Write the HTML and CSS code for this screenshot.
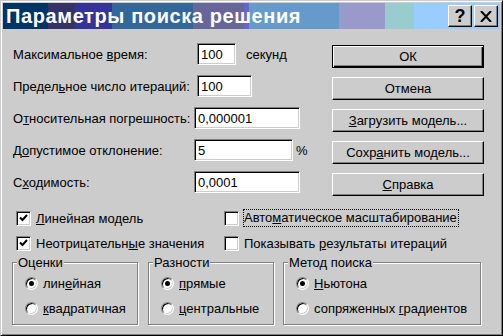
FILE: index.html
```html
<!DOCTYPE html>
<html lang="ru">

<head>
    <meta charset="UTF-8">
    <title>Параметры поиска решения</title>
    <link rel="stylesheet" href="styles.css">
</head>

<body>
    <div class="window">
        <!-- Title bar -->
        <div class="titlebar">
            <span class="title">Параметры поиска решения</span>
            <div class="caption-buttons">
                <button class="caption-btn help">?</button>
                <button class="caption-btn close">
                    <svg width="12" height="11" viewBox="0 0 12 11">
                        <path d="M1 0 L11 11 M11 0 L1 11" stroke="#000" stroke-width="2" />
                    </svg>
                </button>
            </div>
        </div>

        <div class="content">
            <div class="top">
                <div class="fields">
                    <div class="label">Максимальное <u>в</u>ремя:</div>
                    <div class="field shift">
                        <div class="input w39">100</div>
                        <span class="unit">секунд</span>
                    </div>

                    <div class="label">Предел<u>ь</u>ное число итераций:</div>
                    <div class="field shift">
                        <div class="input w55">100</div>
                    </div>

                    <div class="label">О<u>т</u>носительная погрешность:</div>
                    <div class="field">
                        <div class="input w106">0,000001</div>
                    </div>

                    <div class="label">Д<u>о</u>пустимое отклонение:</div>
                    <div class="field">
                        <div class="input w99">5</div>
                        <span class="percent">%</span>
                    </div>

                    <div class="label">С<u>х</u>одимость:</div>
                    <div class="field">
                        <div class="input w106">0,0001</div>
                    </div>
                </div>

                <div class="actions">
                    <button class="btn default">ОК</button>
                    <button class="btn">Отмена</button>
                    <button class="btn"><u>З</u>агрузить модель...</button>
                    <button class="btn">Сохр<u>а</u>нить модель...</button>
                    <button class="btn"><u>С</u>правка</button>
                </div>
            </div>

            <!-- Checkboxes -->
            <div class="checks">
                <label class="check">
                    <span class="box"><svg width="9" height="8" viewBox="0 0 9 8"><path d="M1 3.5 L3.5 6 L8 1" fill="none" stroke="#000" stroke-width="2" /></svg></span>
                    <span><u>Л</u>инейная модель</span>
                </label>
                <label class="check">
                    <span class="box"></span>
                    <span class="focus">Авто<u>м</u>атическое масштабирование</span>
                </label>
                <label class="check">
                    <span class="box"><svg width="9" height="8" viewBox="0 0 9 8"><path d="M1 3.5 L3.5 6 L8 1" fill="none" stroke="#000" stroke-width="2" /></svg></span>
                    <span>Неотрицательн<u>ы</u>е значения</span>
                </label>
                <label class="check">
                    <span class="box"></span>
                    <span>Показывать <u>р</u>езультаты итераций</span>
                </label>
            </div>

            <!-- Groups -->
            <div class="groups">
                <fieldset class="group g-small">
                    <legend>Оценки</legend>
                    <div class="radio-row"><span class="radio on"></span><span>лин<u>е</u>йная</span></div>
                    <div class="radio-row"><span class="radio"></span><span><u>к</u>вадратичная</span></div>
                </fieldset>
                <fieldset class="group g-small">
                    <legend>Разности</legend>
                    <div class="radio-row"><span class="radio on"></span><span><u>п</u>рямые</span></div>
                    <div class="radio-row"><span class="radio"></span><span><u>ц</u>ентральные</span></div>
                </fieldset>
                <fieldset class="group g-wide">
                    <legend>Метод поиска</legend>
                    <div class="radio-row"><span class="radio on"></span><span><u>Н</u>ьютона</span></div>
                    <div class="radio-row"><span class="radio"></span><span>сопряженных <u>г</u>радиентов</span></div>
                </fieldset>
            </div>
        </div>
    </div>
</body>

</html>
```

FILE: styles.css
```css
body {
    margin: 0;
    background-color: #ccc;
    font-family: "Liberation Sans", Arial, sans-serif;
    font-size: 13px;
    color: #000;
}

.window {
    box-sizing: border-box;
    width: 503px;
    height: 336px;
    padding: 2px;
    border: 1px solid;
    border-color: #ccc #000 #000 #ccc;
    box-shadow: inset 1px 1px #fff, inset -1px -1px #808080;
    background-color: #ccc;
}

/* Title bar */
.titlebar {
    height: 26px;
    display: flex;
    align-items: center;
    justify-content: space-between;
    padding-left: 3px;
    padding-right: 2px;
    background: linear-gradient(to right,
            #003366 0 45px, #333366 45px 72px, #333399 72px 109px,
            #336699 109px 190px, #666699 190px 241px, #6666cc 241px 246px,
            #6699cc 246px 336px, #9999cc 336px 382px, #99cccc 382px 411px,
            #99ccff 411px);
}

.title {
    color: #fff;
    font-weight: bold;
    font-size: 20px;
    letter-spacing: 0.6px;
}

.caption-buttons {
    display: flex;
    gap: 2px;
}

.caption-btn {
    box-sizing: border-box;
    width: 24px;
    height: 22px;
    padding: 0;
    display: flex;
    align-items: center;
    justify-content: center;
    background-color: #ccc;
    border: 1px solid;
    border-color: #fff #000 #000 #fff;
    box-shadow: inset -1px -1px #808080;
    font-family: "Liberation Sans", Arial, sans-serif;
    font-weight: bold;
    font-size: 18px;
}

/* Content */
.content {
    padding: 14px 0 0 10px;
}

.top {
    display: flex;
}

.fields {
    display: grid;
    grid-template-columns: 181px auto;
    grid-auto-rows: 22px;
    row-gap: 10px;
    align-items: center;
    width: 319px;
}

.field {
    display: flex;
    align-items: center;
}

.field.shift {
    padding-left: 3px;
}

.input {
    box-sizing: border-box;
    height: 22px;
    padding: 3px 0 0 3px;
    background-color: #fff;
    border: 1px solid;
    border-color: #808080 #fff #fff #808080;
    box-shadow: inset 1px 1px #000, inset -1px -1px #ccc;
}

.w39 { width: 39px; }
.w55 { width: 55px; }
.w99 { width: 99px; }
.w106 { width: 106px; }

.unit {
    margin-left: 10px;
}

.percent {
    margin-left: 3px;
}

.actions {
    display: flex;
    flex-direction: column;
    gap: 9px;
    margin-top: 2px;
}

.btn {
    box-sizing: border-box;
    width: 152px;
    height: 23px;
    padding: 0;
    background-color: #ccc;
    border: 1px solid;
    border-color: #fff #000 #000 #fff;
    box-shadow: inset -1px -1px #808080;
    font-family: "Liberation Sans", Arial, sans-serif;
    font-size: 13px;
    color: #000;
}

.btn.default {
    border-color: #000;
    box-shadow: inset 1px 1px #fff, inset -1px -1px #000, inset -2px -2px #808080;
}

/* Checkboxes */
.checks {
    display: grid;
    grid-template-columns: 208px auto;
    grid-auto-rows: 16px;
    row-gap: 9px;
    margin-top: 14px;
    padding-left: 3px;
}

.check {
    display: flex;
    align-items: center;
    gap: 5px;
}

.box {
    box-sizing: border-box;
    width: 15px;
    height: 15px;
    display: flex;
    align-items: center;
    justify-content: center;
    background-color: #fff;
    border: 1px solid;
    border-color: #808080 #fff #fff #808080;
    box-shadow: inset 1px 1px #000, inset -1px -1px #ccc;
}

.focus {
    outline: 1px dotted #000;
    padding: 0 1px 1px 0;
}

/* Group boxes */
.groups {
    display: flex;
    gap: 10px;
    margin-top: 4px;
    margin-left: -1px;
}

.group {
    box-sizing: border-box;
    height: 70px;
    margin: 0;
    padding: 1px 0 0 12px;
    border: 1px solid #808080;
    box-shadow: inset 1px 1px #fff, 1px 1px #fff;
}

.g-small {
    width: 126px;
}

.g-wide {
    width: 198px;
    margin-left: -1px;
}

.group legend {
    padding: 0 1px;
    margin-left: -8px;
    background-color: #ccc;
}

.radio-row {
    display: flex;
    align-items: center;
    gap: 5px;
    height: 25px;
}

.radio {
    box-sizing: border-box;
    width: 13px;
    height: 13px;
    border-radius: 50%;
    display: flex;
    align-items: center;
    justify-content: center;
    background-color: #fff;
    border: 1px solid;
    border-color: #808080 #fff #fff #808080;
    box-shadow: inset 1px 1px #000, inset -1px -1px #ccc;
}

.radio.on::after {
    content: "";
    width: 5px;
    height: 5px;
    border-radius: 50%;
    background-color: #000;
}
```
